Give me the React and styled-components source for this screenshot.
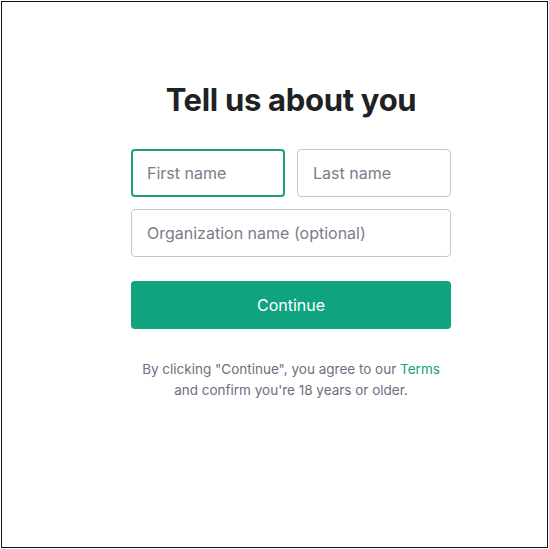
import React from 'react'
import styled, { createGlobalStyle } from 'styled-components';

const GlobalStyle = createGlobalStyle`
  html, body {
    margin: 0;
    padding: 0;
    background: #ffffff;
  }
  body {
    font-family: Inter, "Noto Sans", "Liberation Sans", sans-serif;
  }
`;

const App = () => {
  return (
    <>
      <GlobalStyle />
      <Page>
        <Frame>
          <Title>Tell us about you</Title>
          <Form onSubmit={(e) => e.preventDefault()}>
            <Row>
              <Field placeholder="First name" $focused autoFocus />
              <Field placeholder="Last name" />
            </Row>
            <Field placeholder="Organization name (optional)" />
            <ContinueButton type="submit">Continue</ContinueButton>
          </Form>
          <Legal>
            By clicking "Continue", you agree to our <TermsLink href="#">Terms</TermsLink>
            <br />
            and confirm you're 18 years or older.
          </Legal>
        </Frame>
      </Page>
    </>
  );
};

export default App


const Page = styled.div`
  padding: 1px;
  width: 549px;
  height: 549px;
  box-sizing: border-box;
`;

const Frame = styled.div`
  width: 547px;
  height: 547px;
  box-sizing: border-box;
  border: 1px solid #111111;
  display: flex;
  flex-direction: column;
  align-items: center;
  padding: 78px 0 0 33px;
`;

const Title = styled.h1`
  margin: 0 0 29px;
  font-size: 31px;
  line-height: 40px;
  font-weight: 700;
  color: #202123;
  letter-spacing: -0.3px;
`;

const Form = styled.form`
  width: 320px;
  display: flex;
  flex-direction: column;
  gap: 12px;
`;

const Row = styled.div`
  display: grid;
  grid-template-columns: 1fr 1fr;
  gap: 12px;
`;

const Field = styled.input`
  height: 48px;
  width: 100%;
  box-sizing: border-box;
  border: ${(p) => (p.$focused ? '2px solid #1f9c7d' : '1px solid #c2c8d0')};
  border-radius: 4px;
  padding: 0 ${(p) => (p.$focused ? '14px' : '15px')};
  font-family: inherit;
  font-size: 16px;
  color: #2d333a;
  background: #ffffff;
  outline: none;

  &::placeholder {
    color: #7c7c8a;
  }
`;

const ContinueButton = styled.button`
  margin-top: 12px;
  height: 48px;
  width: 100%;
  border: none;
  border-radius: 4px;
  background-color: #10a37f;
  color: #ffffff;
  font-family: inherit;
  font-size: 16px;
  cursor: pointer;
`;

const Legal = styled.p`
  margin: 30px 0 0;
  text-align: center;
  font-size: 13.5px;
  line-height: 21px;
  color: #6e6e80;
`;

const TermsLink = styled.a`
  color: #10a37f;
  text-decoration: none;
`;
